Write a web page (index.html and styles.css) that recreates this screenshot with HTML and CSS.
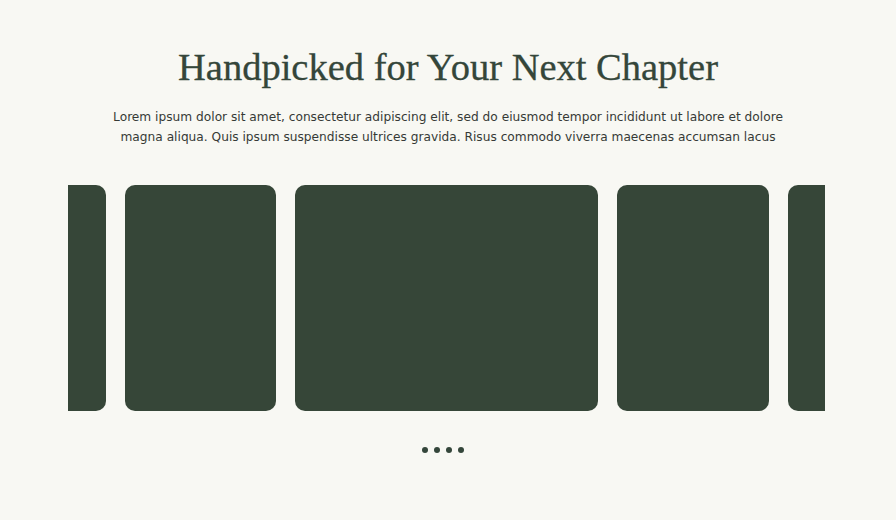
FILE: index.html
```html
<!DOCTYPE html>
<html lang="en">
<head>
<meta charset="utf-8">
<title>Handpicked for Your Next Chapter</title>
<link rel="stylesheet" href="styles.css">
</head>
<body>
<section class="picks">
  <h1 class="picks-title">Handpicked for Your Next Chapter</h1>
  <p class="picks-lead">Lorem ipsum dolor sit amet, consectetur adipiscing elit, sed do eiusmod tempor incididunt ut labore et dolore magna aliqua. Quis ipsum suspendisse ultrices gravida. Risus commodo viverra maecenas accumsan lacus</p>
  <div class="carousel">
    <div class="track">
      <div class="card"></div>
      <div class="card"></div>
      <div class="card card-wide"></div>
      <div class="card"></div>
      <div class="card"></div>
    </div>
  </div>
  <div class="dots">
    <span class="dot"></span>
    <span class="dot"></span>
    <span class="dot"></span>
    <span class="dot"></span>
  </div>
</section>
</body>
</html>
```
FILE: styles.css
```css
html, body {
  margin: 0;
  padding: 0;
  background: #f8f8f3;
}
.picks {
  display: flex;
  flex-direction: column;
  align-items: center;
  padding-top: 44px;
}
.picks-title {
  margin: 0;
  font-family: "Liberation Serif", "DejaVu Serif", serif;
  font-weight: 400;
  font-size: 38.5px;
  line-height: 46px;
  color: #34463a;
  -webkit-text-stroke: 0.3px #34463a;
}
.picks-lead {
  margin: 17px 0 0;
  max-width: 690px;
  text-align: center;
  font-family: "DejaVu Sans", "Noto Sans", sans-serif;
  font-size: 12.2px;
  line-height: 20px;
  color: #363a36;
}
.carousel {
  margin-top: 38px;
  margin-right: 3px;
  width: 757px;
  overflow: hidden;
}
.track {
  display: flex;
  justify-content: center;
  gap: 19px;
}
.card {
  flex: none;
  width: 151.5px;
  height: 226px;
  border-radius: 10px;
  background: #364638;
}
.card-wide {
  width: 303px;
}
.dots {
  margin-top: 36px;
  margin-right: 11px;
  display: flex;
  gap: 6px;
}
.dot {
  width: 6px;
  height: 6px;
  border-radius: 50%;
  background: #34463a;
}
```
